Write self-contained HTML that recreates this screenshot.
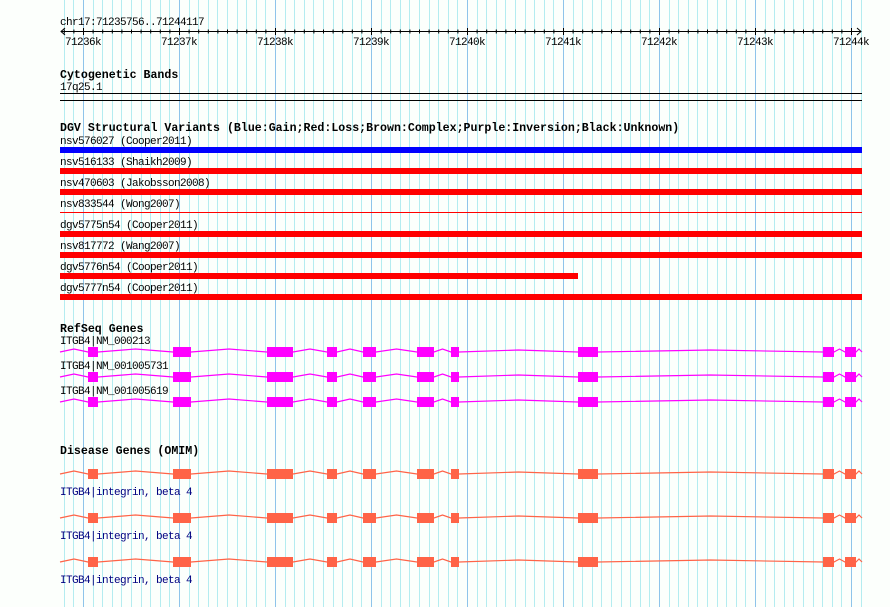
<!DOCTYPE html>
<html><head><meta charset="utf-8"><style>
html,body{margin:0;padding:0;background:#fcfffc;}
svg{display:block;}
text{font-family:"Liberation Mono","DejaVu Sans Mono",monospace;font-size:11px;letter-spacing:-0.6px;fill:#000;}
.h{font-weight:bold;font-size:11.6px;letter-spacing:0;}
.d{fill:#000080;}
</style></head><body>
<svg width="890" height="607" viewBox="0 0 890 607" xmlns="http://www.w3.org/2000/svg">
<defs>
<pattern id="grid" patternUnits="userSpaceOnUse" x="-13" y="0" width="96" height="607">
<rect x="0" y="0" width="1" height="607" fill="#8ec4ea"/>
<g fill="#b4ecf0">
<rect x="10" width="1" height="607"/><rect x="19" width="1" height="607"/><rect x="29" width="1" height="607"/>
<rect x="38" width="1" height="607"/><rect x="48" width="1" height="607"/><rect x="58" width="1" height="607"/>
<rect x="67" width="1" height="607"/><rect x="77" width="1" height="607"/><rect x="86" width="1" height="607"/>
</g>
</pattern>
<g id="gene">
<polyline fill="none" stroke-width="1.2" points="60,0 74,-3 88,0 98,0 135.5,-3 173,0 191,0 229,-3 267,0 293,0 310,-3 327,0 337,0 350,-3 363,0 376,0 396.5,-3 417,0 434,0 442.5,-3 451,0 459,0 518.5,-2 578,0 598,0 710.5,-2 823,0 834,0 839.5,-3 845,0 856,0 859,-3 862,0"/>
<g stroke="none">
<rect x="88" y="-5" width="10" height="10"/><rect x="173" y="-5" width="18" height="10"/>
<rect x="267" y="-5" width="26" height="10"/><rect x="327" y="-5" width="10" height="10"/>
<rect x="363" y="-5" width="13" height="10"/><rect x="417" y="-5" width="17" height="10"/>
<rect x="451" y="-5" width="8" height="10"/><rect x="578" y="-5" width="20" height="10"/>
<rect x="823" y="-5" width="11" height="10"/><rect x="845" y="-5" width="11" height="10"/>
</g>
</g>
<path id="tk" stroke="#000" stroke-width="1" d="M189.1 29.5v4M198.7 29.5v4M208.3 29.5v4M217.9 29.5v4M227.5 29.5v4M237.1 29.5v4M246.7 29.5v4M256.3 29.5v4M265.9 29.5v4"/>
</defs>
<rect x="58" y="0" width="806" height="607" fill="url(#grid)"/>

<text x="60" y="25">chr17:71235756..71244117</text>
<line x1="61" y1="31.5" x2="861" y2="31.5" stroke="#000"/>
<polyline points="65,28 61,31.5 65,35" fill="none" stroke="#000"/>
<polyline points="857,28 861,31.5 857,35" fill="none" stroke="#000"/>
<g stroke="#000">
<line x1="83.5" y1="28" x2="83.5" y2="35"/><line x1="179.5" y1="28" x2="179.5" y2="35"/><line x1="275.5" y1="28" x2="275.5" y2="35"/>
<line x1="371.5" y1="28" x2="371.5" y2="35"/><line x1="467.5" y1="28" x2="467.5" y2="35"/><line x1="563.5" y1="28" x2="563.5" y2="35"/>
<line x1="659.5" y1="28" x2="659.5" y2="35"/><line x1="755.5" y1="28" x2="755.5" y2="35"/><line x1="851.5" y1="28" x2="851.5" y2="35"/>
</g>
<g stroke="#000" stroke-width="1">
<path d="M93.1 29.5v4M102.7 29.5v4M112.3 29.5v4M121.9 29.5v4M131.5 29.5v4M141.1 29.5v4M150.7 29.5v4M160.3 29.5v4M169.9 29.5v4"/>
<path d="M73.9 29.5v4M64.3 29.5v4"/>
</g>
<use href="#tk"/><use href="#tk" x="96"/><use href="#tk" x="192"/><use href="#tk" x="288"/><use href="#tk" x="384"/><use href="#tk" x="480"/><use href="#tk" x="576"/>
<g>
<text x="65" y="45">71236k</text><text x="161" y="45">71237k</text><text x="257" y="45">71238k</text>
<text x="353" y="45">71239k</text><text x="449" y="45">71240k</text><text x="545" y="45">71241k</text>
<text x="641" y="45">71242k</text><text x="737" y="45">71243k</text><text x="833" y="45">71244k</text>
</g>

<text class="h" x="60" y="78">Cytogenetic Bands</text>
<text x="60" y="90">17q25.1</text>
<rect x="60" y="93" width="802" height="1" fill="#000"/>
<rect x="60" y="100" width="802" height="1" fill="#000"/>

<text class="h" x="60" y="131">DGV Structural Variants (Blue:Gain;Red:Loss;Brown:Complex;Purple:Inversion;Black:Unknown)</text>
<text x="60" y="144">nsv576027 (Cooper2011)</text>
<rect x="60" y="147" width="802" height="6" fill="#0000ff"/>
<text x="60" y="165">nsv516133 (Shaikh2009)</text>
<rect x="60" y="168" width="802" height="6" fill="#ff0000"/>
<text x="60" y="186">nsv470603 (Jakobsson2008)</text>
<rect x="60" y="189" width="802" height="6" fill="#ff0000"/>
<text x="60" y="207">nsv833544 (Wong2007)</text>
<rect x="60" y="212" width="802" height="1" fill="#ff0000"/>
<text x="60" y="228">dgv5775n54 (Cooper2011)</text>
<rect x="60" y="231" width="802" height="6" fill="#ff0000"/>
<text x="60" y="249">nsv817772 (Wang2007)</text>
<rect x="60" y="252" width="802" height="6" fill="#ff0000"/>
<text x="60" y="270">dgv5776n54 (Cooper2011)</text>
<rect x="60" y="273" width="518" height="6" fill="#ff0000"/>
<text x="60" y="291">dgv5777n54 (Cooper2011)</text>
<rect x="60" y="294" width="802" height="6" fill="#ff0000"/>

<text class="h" x="60" y="332">RefSeq Genes</text>
<text x="60" y="344">ITGB4|NM_000213</text>
<use href="#gene" y="352" fill="#ff00ff" stroke="#ff00ff"/>
<text x="60" y="369">ITGB4|NM_001005731</text>
<use href="#gene" y="377" fill="#ff00ff" stroke="#ff00ff"/>
<text x="60" y="394">ITGB4|NM_001005619</text>
<use href="#gene" y="402" fill="#ff00ff" stroke="#ff00ff"/>

<text class="h" x="60" y="454">Disease Genes (OMIM)</text>
<use href="#gene" y="474" fill="#ff6347" stroke="#ff6347"/>
<text class="d" x="60" y="495">ITGB4|integrin, beta 4</text>
<use href="#gene" y="518" fill="#ff6347" stroke="#ff6347"/>
<text class="d" x="60" y="539">ITGB4|integrin, beta 4</text>
<use href="#gene" y="562" fill="#ff6347" stroke="#ff6347"/>
<text class="d" x="60" y="583">ITGB4|integrin, beta 4</text>
</svg>
</body></html>
